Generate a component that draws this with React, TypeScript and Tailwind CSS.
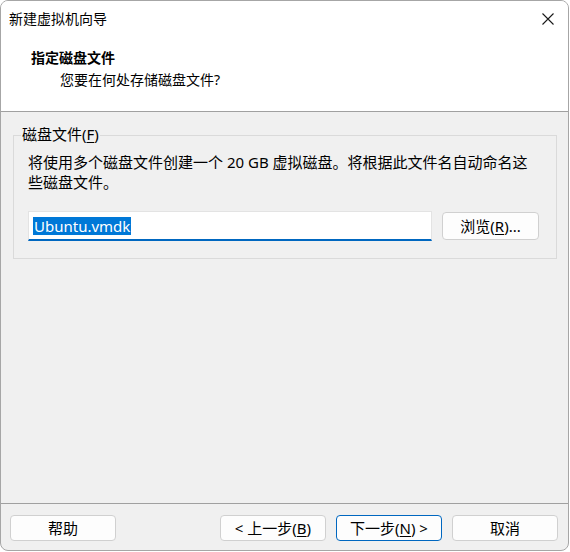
import React from "react";

const font = { fontFamily: '"Noto Sans", "Noto Sans CJK SC", sans-serif' };

function Btn({ children, primary }: { children: React.ReactNode; primary?: boolean }) {
  return (
    <div
      className={
        "w-[106px] h-[26px] rounded-[4px] border bg-[#fdfdfd] flex items-center justify-center text-[15px] leading-[20px] text-black " +
        (primary ? "border-[#0067c0]" : "border-[#d0d0d0]")
      }
    >
      {children}
    </div>
  );
}

export default function App() {
  return (
    <div className="w-[570px] h-[552px] bg-white" style={font}>
      <div className="w-[569px] h-[551px] border border-[#a6a6a6] rounded-[8px] overflow-hidden flex flex-col bg-[#f0f0f0]">
        {/* title bar */}
        <div className="h-[36px] bg-white flex items-center justify-between pl-[8px] pr-[14px]">
          <span className="text-[14px] leading-[20px] text-black">新建虚拟机向导</span>
          <svg width="12" height="12" viewBox="0 0 12 12">
            <path d="M0.5 0.5 L11.5 11.5 M11.5 0.5 L0.5 11.5" stroke="#1a1a1a" strokeWidth="1.1" />
          </svg>
        </div>
        {/* header */}
        <div className="h-[75px] bg-white border-b border-[#a0a0a0] pt-[11px]">
          <div className="pl-[30px] text-[14px] leading-[20px] font-bold text-black">指定磁盘文件</div>
          <div className="pl-[59px] text-[14px] leading-[20px] text-black mt-[2px]">您要在何处存储磁盘文件?</div>
        </div>
        {/* body */}
        <div className="flex-1 pt-[23px] pl-[12px]">
          <div className="relative w-[544px] h-[124px] border border-[#dadada] pt-[16px] pl-[14px]">
            <div className="absolute left-[7px] top-[-12px] px-[1px] bg-[#f0f0f0] text-[15px] leading-[20px] text-black">
              磁盘文件(<span className="underline underline-offset-2">F</span>)
            </div>
            <div className="text-[15px] leading-[20px] text-black whitespace-nowrap">
              将使用多个磁盘文件创建一个 20 GB 虚拟磁盘。将根据此文件名自动命名这
              <br />
              些磁盘文件。
            </div>
            <div className="flex items-start gap-[10px] mt-[19px]">
              <div className="w-[404px] h-[30px] bg-white border border-[#e3e3e3] border-b-2 border-b-[#0067c0] pl-[4px] pt-[2px]">
                <span className="bg-[#0078d7] text-white text-[15px] leading-[18px] inline-block px-[1px]">
                  Ubuntu.vmdk
                </span>
              </div>
              <div className="w-[97px] h-[28px] mt-[1px] rounded-[4px] border border-[#d0d0d0] bg-[#fdfdfd] flex items-center justify-center text-[15px] leading-[20px] text-black">
                浏览(<span className="underline underline-offset-2">R</span>)...
              </div>
            </div>
          </div>
        </div>
        {/* footer */}
        <div className="h-[47px] border-t border-[#a0a0a0] pt-[11px] pl-[9px] pr-[10px] flex items-start justify-between">
          <Btn>帮助</Btn>
          <div className="flex gap-[10px]">
            <Btn>
              &lt; 上一步(<span className="underline underline-offset-2">B</span>)
            </Btn>
            <Btn primary>
              下一步(<span className="underline underline-offset-2">N</span>) &gt;
            </Btn>
            <Btn>取消</Btn>
          </div>
        </div>
      </div>
    </div>
  );
}
